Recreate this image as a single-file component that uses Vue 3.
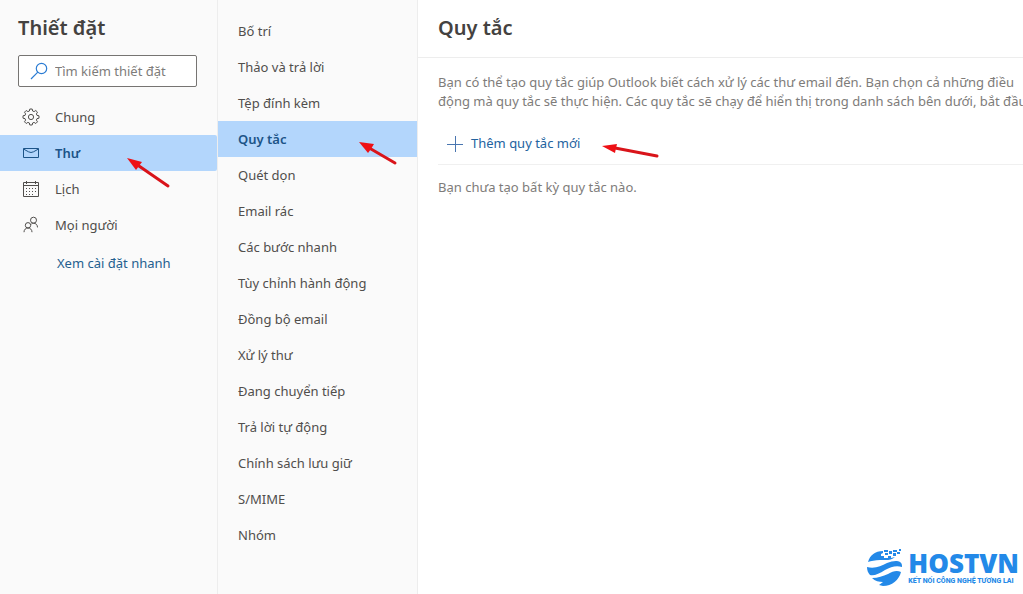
<script setup>
import { ref } from 'vue'

const search = ref('')
const sections = [
  { id: 'general', label: 'Chung' },
  { id: 'mail', label: 'Thư' },
  { id: 'calendar', label: 'Lịch' },
  { id: 'people', label: 'Mọi người' },
]
const activeSection = ref('mail')

const pages = [
  'Bố trí',
  'Thảo và trả lời',
  'Tệp đính kèm',
  'Quy tắc',
  'Quét dọn',
  'Email rác',
  'Các bước nhanh',
  'Tùy chỉnh hành động',
  'Đồng bộ email',
  'Xử lý thư',
  'Đang chuyển tiếp',
  'Trả lời tự động',
  'Chính sách lưu giữ',
  'S/MIME',
  'Nhóm',
]
const activePage = ref('Quy tắc')
</script>

<template>
  <div class="settings">
    <aside class="sidebar">
      <h1 class="title">Thiết đặt</h1>
      <label class="search">
        <svg width="18" height="18" viewBox="0 0 18 18" fill="none" stroke="#2b7cd3" stroke-width="1.2" aria-hidden="true">
          <circle cx="11.5" cy="6.5" r="5.2" />
          <path d="M7.8 10.2 1 17" />
        </svg>
        <input v-model="search" type="search" placeholder="Tìm kiếm thiết đặt" aria-label="Tìm kiếm thiết đặt" />
      </label>
      <nav class="sections">
        <button
          v-for="s in sections"
          :key="s.id"
          type="button"
          class="section"
          :class="{ active: s.id === activeSection }"
          @click="activeSection = s.id"
        >
          <svg width="18" height="18" viewBox="0 0 18 18" fill="none" stroke="currentColor" stroke-width="1" aria-hidden="true">
            <template v-if="s.id === 'general'">
              <path stroke-linejoin="round" d="M7.8 1h2.400l.4 2 1.500.6 1.700-1.100 1.700 1.700-1.100 1.700.6 1.500 2 .4v2.400l-2 .4-.6 1.500 1.100 1.700-1.700 1.700-1.700-1.100-1.500.6-.4 2H7.800l-.4-2-1.500-.6-1.700 1.100-1.700-1.700 1.100-1.700-.6-1.500-2-.4V7.800l2-.4.6-1.500-1.100-1.700 1.700-1.700 1.700 1.100 1.500-.6z" />
              <circle cx="9" cy="9" r="2.600" />
            </template>
            <template v-else-if="s.id === 'mail'">
              <path d="M1.500 4.500h15v9h-15z" />
              <path d="M1.500 5 6.500 7.800Q9 9.200 11.500 7.800L16.500 5" />
            </template>
            <template v-else-if="s.id === 'calendar'">
              <path d="M1.500 2.500h15v14h-15zM1.500 5.500h15M4.500 1v3M13.500 1v3" />
              <path stroke-dasharray="1 2" d="M4 8.500h11M4 11.500h11M4 14.500h8" />
            </template>
            <template v-else>
              <circle cx="11.500" cy="4.200" r="3" />
              <circle cx="6" cy="9.300" r="2.700" />
              <path d="M2 16.200c0-2.600 1.700-4.200 4-4.200s4 1.600 4 4.200M9.300 8.100c.7-.6 1.400-.9 2.200-.9 2.300 0 4 1.600 4 4.200" />
            </template>
          </svg>
          <span>{{ s.label }}</span>
        </button>
      </nav>
      <a class="quick" href="#">Xem cài đặt nhanh</a>
    </aside>

    <nav class="pages">
      <button
        v-for="p in pages"
        :key="p"
        type="button"
        class="page"
        :class="{ active: p === activePage }"
        @click="activePage = p"
      >{{ p }}</button>
    </nav>

    <main class="content">
      <header class="head"><h2 class="title">Quy tắc</h2></header>
      <div class="body">
        <p class="intro">
          Bạn có thể tạo quy tắc giúp Outlook biết cách xử lý các thư email đến. Bạn chọn cả những điều<br />
          động mà quy tắc sẽ thực hiện. Các quy tắc sẽ chạy để hiển thị trong danh sách bên dưới, bắt đầu
        </p>
        <button type="button" class="add">
          <svg width="16" height="16" viewBox="0 0 16 16" stroke="currentColor" aria-hidden="true">
            <path d="M8.500 0v16M0 8.500h16" />
          </svg>
          <span>Thêm quy tắc mới</span>
        </button>
        <p class="empty">Bạn chưa tạo bất kỳ quy tắc nào.</p>
      </div>
      <footer class="brand">
        <svg width="36" height="38" viewBox="0 0 36 38" fill="#2389e8" aria-hidden="true">
          <path d="M1 13C3 6 8 2 16 2l0 2-2 1 0 2 3 0 0 2 4 0 0-2 3 0 0 2 4-1C24 12 19 11 13 11 8 11 4 12 1 13z" />
          <path d="M17 1h4v2h-4zM18 4h3v2h-3zM22 2h3v3h-3zM26 1h4v2h-4zM26 4h3v3h-3zM30 3h3v2h-3zM32 0h2v2h-2z" />
          <path d="M0 18C8 20 14 17 20 14 25 12 30 11 33 13 35 14 35 16 35 18 29 16 24 18 18 21 12 25 7 27 3 26 1 24 0 21 0 18z" />
          <path d="M5 29C11 29 16 27 21 25 26 22 30 21 34 23 32 31 25 37 16 37L12 36 16 33C12 33 8 32 5 29z" />
        </svg>
        <div class="wordmark">
          <strong>HOSTVN</strong>
          <span>KẾT NỐI CÔNG NGHỆ TƯƠNG LAI</span>
        </div>
      </footer>
    </main>

    <svg class="arrow arrow-section" width="44" height="34" viewBox="0 0 44 34" aria-hidden="true">
      <path d="M12 9 41 29" stroke="#d9141a" stroke-width="3" stroke-linecap="round" />
      <path d="M0 1 15 5 12 9 9 13z" fill="#ee1015" />
    </svg>
    <svg class="arrow arrow-page" width="40" height="25" viewBox="0 0 40 25" aria-hidden="true">
      <path d="M12 7 36 21" stroke="#d9141a" stroke-width="3" stroke-linecap="round" />
      <path d="M0 0 15 2 12 7 9 11z" fill="#ee1015" />
    </svg>
    <svg class="arrow arrow-add" width="60" height="18" viewBox="0 0 60 18" aria-hidden="true">
      <path d="M13 5 55 13" stroke="#d9141a" stroke-width="3" stroke-linecap="round" />
      <path d="M0 3 15 1 14 5 13 10z" fill="#ee1015" />
    </svg>
  </div>
</template>

<style>
body {
  margin: 0;
  background: #fff;
}
</style>

<style scoped>
.settings {
  position: relative;
  display: grid;
  grid-template-columns: 217px 201px minmax(0, 1fr);
  min-height: 100vh;
  overflow: hidden;
  font-family: 'Noto Sans', 'Open Sans', sans-serif;
  font-size: 13px;
  line-height: 19px;
  color: #504e4c;
}
h1, h2, p {
  margin: 0;
}
button {
  border: 0;
  background: none;
  font: inherit;
  color: inherit;
  text-align: left;
  cursor: pointer;
}
.title {
  font-size: 20px;
  line-height: 28px;
  font-weight: 600;
  color: #444240;
}
.sidebar {
  background: #fafafa;
  padding-top: 14px;
}
.sidebar .title {
  padding: 0 18px;
}
.search {
  display: flex;
  align-items: center;
  gap: 7px;
  height: 32px;
  box-sizing: border-box;
  margin: 13px 20px 12px 18px;
  padding: 0 11px;
  border: 1px solid #767472;
  border-radius: 2px;
  background: #fff;
}
.search svg {
  flex: none;
}
.search input {
  flex: 1;
  min-width: 0;
  padding: 0;
  border: 0;
  outline: 0;
  background: none;
  font: inherit;
  color: inherit;
}
.search input::placeholder {
  color: #7e7c7a;
  opacity: 1;
}
.sections {
  display: flex;
  flex-direction: column;
}
.section {
  display: flex;
  align-items: center;
  gap: 15px;
  height: 36px;
  padding: 0 22px;
  border-radius: 0 2px 2px 0;
}
.active {
  background: #b3d6fc;
  color: #1c5488;
  font-weight: 600;
}
.quick {
  display: block;
  margin: 11px 0 0 57px;
  color: #24608f;
  text-decoration: none;
}
.pages {
  display: flex;
  flex-direction: column;
  padding-top: 13px;
  background: #fafafa;
  border-left: 1px solid #ededed;
  border-right: 1px solid #ededed;
  box-sizing: border-box;
}
.page {
  height: 36px;
  padding: 0 20px;
}
.content {
  display: flex;
  flex-direction: column;
  min-width: 0;
}
.head {
  padding: 14px 20px 15px;
  border-bottom: 1px solid #ededed;
}
.body {
  flex: 1;
  padding: 15px 0 0 20px;
}
.intro {
  white-space: nowrap;
  color: #7e7c7a;
}
.add {
  display: flex;
  align-items: center;
  gap: 8px;
  width: 100%;
  height: 54px;
  padding: 12px 9px 0;
  border-bottom: 1px solid #f0f0f0;
  color: #24639f;
}
.add svg {
  color: #4a76b0;
}
.empty {
  margin-top: 13px;
  color: #7e7c7a;
}
.brand {
  display: flex;
  align-items: center;
  justify-content: flex-end;
  gap: 5px;
  padding: 0 4px 7px 0;
  color: #2389e8;
}
.wordmark {
  display: flex;
  flex-direction: column;
}
.wordmark strong {
  font-family: 'Open Sans', sans-serif;
  font-size: 26px;
  line-height: 27px;
  font-weight: 800;
}
.wordmark span {
  font-family: Roboto, 'Open Sans', sans-serif;
  font-size: 7px;
  line-height: 9px;
  font-weight: 800;
  white-space: nowrap;
}
.arrow {
  position: absolute;
  pointer-events: none;
}
.arrow-section {
  left: 127px;
  top: 157px;
}
.arrow-page {
  left: 359px;
  top: 142px;
}
.arrow-add {
  left: 602px;
  top: 143px;
}
</style>
